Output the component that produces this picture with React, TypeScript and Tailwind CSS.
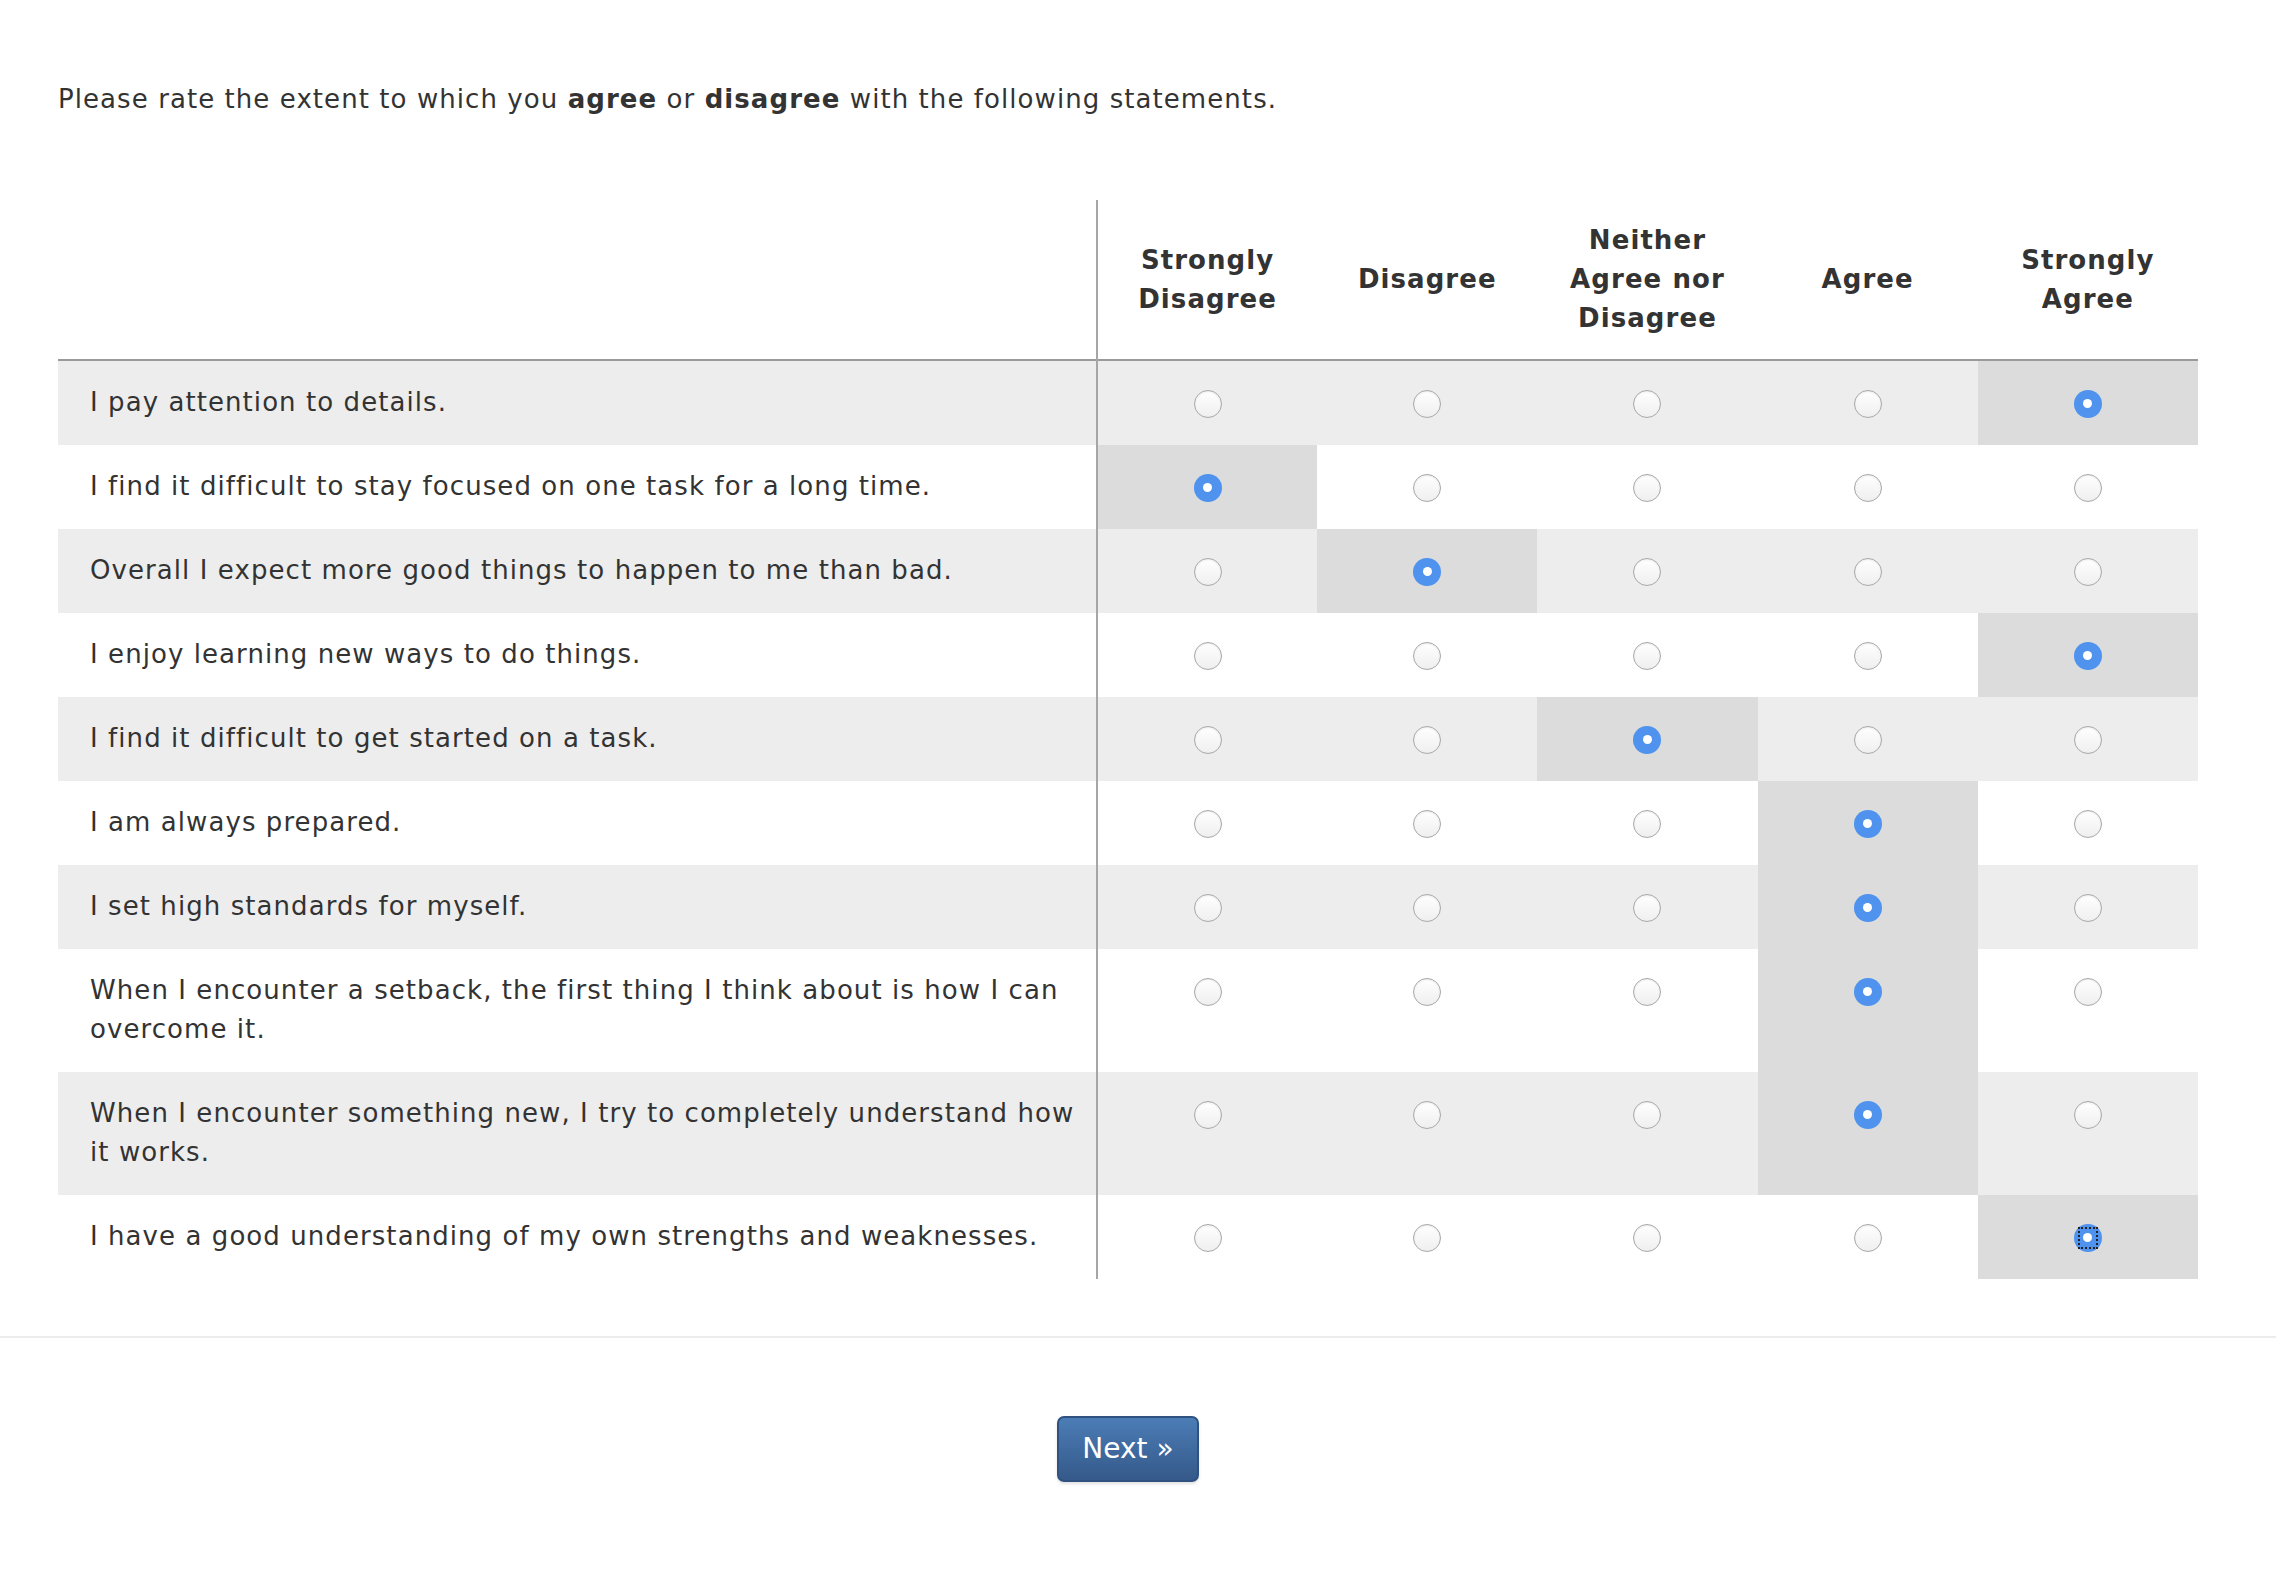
import { useState } from 'react'

const scale = [
  ['Strongly', 'Disagree'],
  ['Disagree'],
  ['Neither', 'Agree nor', 'Disagree'],
  ['Agree'],
  ['Strongly', 'Agree'],
]

const statements: [string, number][] = [
  ['I pay attention to details.', 4],
  ['I find it difficult to stay focused on one task for a long time.', 0],
  ['Overall I expect more good things to happen to me than bad.', 1],
  ['I enjoy learning new ways to do things.', 4],
  ['I find it difficult to get started on a task.', 2],
  ['I am always prepared.', 3],
  ['I set high standards for myself.', 3],
  ['When I encounter a setback, the first thing I think about is how I can overcome it.', 3],
  ['When I encounter something new, I try to completely understand how it works.', 3],
  ['I have a good understanding of my own strengths and weaknesses.', 4],
]

function Radio({ checked, focused }: { checked: boolean; focused?: boolean }) {
  if (checked)
    return (
      <span className="relative flex h-[28px] w-[28px] items-center justify-center rounded-full bg-[#4f93ee]">
        <span className="h-[9px] w-[9px] rounded-full bg-white" />
        {focused && (
          <span className="absolute left-[4px] top-[3px] h-[22px] w-[20px] border-2 border-dotted border-[#222]" />
        )}
      </span>
    )

  return (
    <span className="block h-[28px] w-[28px] rounded-full border-[1.5px] border-[#a8a8a8] bg-linear-to-b from-white to-[#efefef] shadow-[inset_0_1px_2px_rgba(0,0,0,0.08)]" />
  )
}

export default function App() {
  const [answers, setAnswers] = useState(statements.map(s => s[1]))

  return (
    <div
      className="min-h-[1592px] w-full bg-white tracking-[1.07px] text-[#333]"
      style={{ fontFamily: '"DejaVu Sans", Verdana, sans-serif' }}
    >
      <div className="ml-[58px] w-[2140px] pt-[80px]">
        <p className="text-[26px] leading-[39px]">
          Please rate the extent to which you <b>agree</b> or <b>disagree</b> with the following statements.
        </p>

        <table className="mt-[81px] w-full table-fixed border-collapse">
          <colgroup>
            <col className="w-[1039px]" />
            <col />
            <col />
            <col />
            <col />
            <col />
          </colgroup>
          <thead>
            <tr className="h-[160px] border-b-2 border-[#9a9a9a]">
              <th className="border-r-2 border-[#a6a6a6]" />
              {scale.map((lines, i) => (
                <th key={i} className="text-center text-[26px] font-bold leading-[39px] text-[#333]">
                  {lines.map(l => (
                    <div key={l}>{l}</div>
                  ))}
                </th>
              ))}
            </tr>
          </thead>
          <tbody>
            {statements.map(([text], r) => (
              <tr key={r} className={r % 2 === 0 ? 'bg-[#ededed]' : 'bg-white'}>
                <td className="border-r-2 border-[#a6a6a6] pb-[23px] pl-[32px] pr-[8px] pt-[22px] align-top text-[26px] leading-[39px]">
                  {text}
                </td>
                {scale.map((_, c) => (
                  <td
                    key={c}
                    onClick={() => setAnswers(a => a.map((v, k) => (k === r ? c : v)))}
                    className={`cursor-pointer pb-[22px] pt-[23px] align-top ${answers[r] === c ? 'bg-[#dcdcdc]' : ''}`}
                  >
                    <div className="flex h-[39px] items-center justify-center">
                      <Radio checked={answers[r] === c} focused={r === 9 && answers[r] === c} />
                    </div>
                  </td>
                ))}
              </tr>
            ))}
          </tbody>
        </table>
      </div>

      <div className="mt-[57px] h-[2px] w-full bg-[#ececec]" />

      <div className="ml-[58px] flex w-[2140px] justify-center pt-[78px]">
        <button className="flex h-[66px] w-[142px] items-center justify-center rounded-[7px] border-2 border-[#2f5281] bg-linear-to-b from-[#4b7db6] to-[#35598a] text-[28px] tracking-normal text-white shadow-[0_2px_3px_rgba(0,0,0,0.12)]">
          Next »
        </button>
      </div>
    </div>
  )
}
